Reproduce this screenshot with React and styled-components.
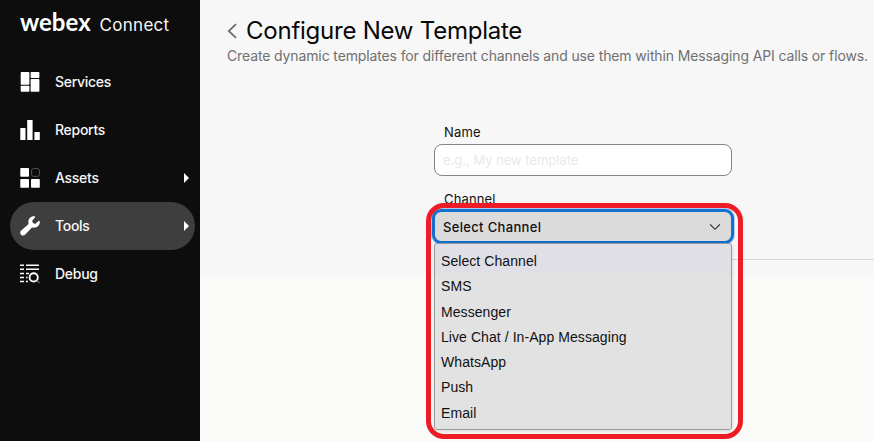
import React from "react";
import styled, { createGlobalStyle, css } from "styled-components";

const GlobalStyle = createGlobalStyle`
  * { box-sizing: border-box; }
  body { margin: 0; overflow: hidden; font-family: Inter, "Liberation Sans", sans-serif; }
  h1, p, ul { margin: 0; padding: 0; }
`;

const Page = styled.div`
  display: flex;
  width: 874px;
  height: 441px;
  overflow: hidden;
`;

const Sidebar = styled.nav`
  width: 200px;
  flex: none;
  padding-left: 10px;
  background: #0d0d0d;
  color: #f7f7f7;
`;

const Brand = styled.div`
  display: flex;
  align-items: baseline;
  height: 58px;
  padding: 9px 0 0 10px;
  line-height: 26px;
  white-space: nowrap;
`;

const BrandName = styled.span`
  width: 79.5px;
  font-family: Lato, sans-serif;
  font-size: 24px;
  font-weight: 700;
  letter-spacing: 0px;
  color: #fff;
`;

const BrandProduct = styled.span`
  font-size: 17px;
  letter-spacing: 0.3px;
`;

const NavItem = styled.div`
  display: flex;
  align-items: center;
  width: 185px;
  height: 48px;
  padding: 0 6px 0 10px;
  border-radius: 24px;
  background: ${(p) => (p.$active ? "#3e3e3e" : "transparent")};
`;

const NavIcon = styled.svg`
  width: 20px;
  height: 20px;
  margin-right: 15px;
  fill: #fff;
`;

const NavLabel = styled.span`
  flex: 1;
  font-size: 14px;
  font-weight: 500;
  line-height: 20px;
  letter-spacing: -0.28px;
`;

const Caret = styled.svg`
  width: 5px;
  height: 10px;
  fill: #fff;
`;

const Main = styled.main`
  flex: 1;
  min-width: 0;
  background: #fafaf8;
`;

const Content = styled.section`
  height: 277px;
  background: #f7f7f7;
`;

const Header = styled.header`
  height: 124px;
  padding: 16px 0 0 27px;
  white-space: nowrap;
`;

const TitleRow = styled.div`
  display: flex;
  align-items: center;
  height: 30px;
`;

const BackIcon = styled.svg`
  width: 10px;
  height: 16px;
  margin-right: 9px;
  fill: none;
  stroke: #6d6d6d;
  stroke-width: 1.8;
`;

const Title = styled.h1`
  font-size: 24px;
  font-weight: 400;
  line-height: 30px;
  letter-spacing: -0.24px;
  color: #080808;
`;

const Subtitle = styled.p`
  font-size: 14px;
  line-height: 20px;
  letter-spacing: -0.125px;
  color: #707070;
`;

const FormRow = styled.div`
  display: flex;
  padding-left: 234px;
`;

const Form = styled.div`
  width: 298px;
  flex: none;
`;

const Divider = styled.div`
  flex: 1;
  height: 136px;
  border-bottom: 1px solid #d8d8d8;
`;

const Label = styled.div`
  height: ${(p) => p.$height}px;
  padding-left: 10px;
  font-size: 13px;
  line-height: 16px;
  letter-spacing: 0.15px;
  color: #111;
`;

const fieldText = css`
  font-family: Inter, sans-serif;
  font-size: 13px;
`;

const NameInput = styled.input`
  ${fieldText}
  display: block;
  width: 298px;
  height: 32px;
  margin-bottom: 15px;
  padding: 0 8px;
  border: 1px solid #858585;
  border-radius: 8px;
  background: #fff;
  outline: none;
  letter-spacing: -0.02px;
  &::placeholder { color: #e9e9ec; opacity: 1; }
`;

const SelectArea = styled.div`
  position: relative;
`;

const SelectBox = styled.div`
  ${fieldText}
  display: flex;
  align-items: center;
  justify-content: space-between;
  width: 302px;
  height: 35px;
  margin-left: -2px;
  padding: 0 10px 0 8px;
  border: 3px solid #146fd1;
  border-radius: 9px;
  background: #dbdbdb;
  box-shadow: 0 0 0 1px #a9cdf0;
  font-weight: 500;
  letter-spacing: 0.33px;
  color: #111;
`;

const Chevron = styled.svg`
  width: 12px;
  height: 8px;
  fill: none;
  stroke: #333;
  stroke-width: 1.1;
`;

const Menu = styled.ul`
  position: absolute;
  top: 34px;
  left: 0;
  width: 298px;
  height: 187px;
  padding-top: 5px;
  list-style: none;
  border: 1px solid #999;
  border-radius: 3px;
  background: linear-gradient(#e0dfe6 0 30px, #e2e2e2 30px);
  box-shadow: 1px 2px 4px rgba(0, 0, 0, 0.12);
  font-family: "Liberation Sans", sans-serif;
`;

const Option = styled.li`
  height: 25.3px;
  padding-left: 6px;
  font-size: 14px;
  line-height: 25px;
  letter-spacing: 0.07px;
  color: #111;
`;

const Highlight = styled.div`
  position: absolute;
  top: -6px;
  left: -8px;
  width: 317px;
  height: 236px;
  border: 5px solid #ee1c25;
  border-radius: 18px;
  pointer-events: none;
`;

const icons = {
  Services: (
    <>
      <rect x="0.7" y="0" width="8.7" height="12.8" rx="0.8" />
      <rect x="10.6" y="0" width="8.8" height="6" rx="0.8" />
      <rect x="0.7" y="13.8" width="8.7" height="6" rx="0.8" />
      <rect x="10.6" y="7" width="8.8" height="12.8" rx="0.8" />
    </>
  ),
  Reports: (
    <>
      <rect x="0.3" y="8" width="5.2" height="12" rx="0.5" />
      <rect x="7.2" y="0" width="5.4" height="20" rx="0.5" />
      <rect x="14.4" y="12" width="5.4" height="8" rx="0.5" />
    </>
  ),
  Assets: (
    <>
      <rect x="0.3" y="0" width="8.7" height="8.8" rx="0.8" />
      <rect x="0.3" y="11" width="8.7" height="8.8" rx="0.8" />
      <rect x="11" y="11" width="8.8" height="8.8" rx="0.8" />
      <rect x="11.6" y="0.6" width="7.8" height="7.8" rx="2" fill="none" stroke="#555" />
    </>
  ),
  Tools: (
    <path d="M14.4 0.2C11 -0.1 8.2 2.6 8.3 6.1L8.6 8L1 14.8C-0.1 15.8 0 17.6 1 18.7C2.1 19.9 4 19.9 5 18.8L12 11.4L13.8 11.7C17.4 11.8 20.1 8.8 19.8 5.5C19.7 4.7 19 4.7 18.6 5.1L15.8 7.4C14.7 8 13.6 7.4 12.9 6.7C12.2 5.9 12.1 4.8 12.7 4.1L15.1 1.2C15.5 0.7 15.1 0.3 14.4 0.2Z" />
  ),
  Debug: (
    <>
      <path d="M0 0.5h4v1.5H0zM6 0.5h13v1.5H6zM0 4.5h4v1.5H0zM6 4.5h13v1.5H6zM0 8.7h4v1.5H0zM6 8.7h3v1.5H6zM0 12.8h4v1.5H0zM6 12.8h1.5v1.5H6zM0 16.8h4v1.5H0zM6 16.8h2v1.5H6z" />
      <circle cx="13.7" cy="13.4" r="4.1" fill="none" stroke="#fff" strokeWidth="1.9" />
      <path d="M17 16.5L19.6 19.2" stroke="#aaa" strokeWidth="1" />
    </>
  ),
};

const navItems = [
  { label: "Services" },
  { label: "Reports" },
  { label: "Assets", expandable: true },
  { label: "Tools", expandable: true, active: true },
  { label: "Debug" },
];

const options = [
  "Select Channel",
  "SMS",
  "Messenger",
  "Live Chat / In-App Messaging",
  "WhatsApp",
  "Push",
  "Email",
];

export default function App() {
  return (
    <Page>
      <GlobalStyle />
      <Sidebar>
        <Brand>
          <BrandName>webex</BrandName>
          <BrandProduct>Connect</BrandProduct>
        </Brand>
        {navItems.map(({ label, expandable, active }) => (
          <NavItem key={label} $active={active}>
            <NavIcon viewBox="0 0 20 20">{icons[label]}</NavIcon>
            <NavLabel>{label}</NavLabel>
            {expandable && (
              <Caret viewBox="0 0 5 10">
                <path d="M0 0L5 5L0 10Z" />
              </Caret>
            )}
          </NavItem>
        ))}
      </Sidebar>
      <Main>
        <Content>
          <Header>
            <TitleRow>
              <BackIcon viewBox="0 0 10 16">
                <path d="M9 1.2L1.8 8L9 14.8" />
              </BackIcon>
              <Title>Configure New Template</Title>
            </TitleRow>
            <Subtitle>
              Create dynamic templates for different channels and use them within Messaging API calls or flows.
            </Subtitle>
          </Header>
          <FormRow>
            <Form>
              <Label $height={20}>Name</Label>
              <NameInput placeholder="e.g., My new template" />
              <Label $height={18}>Channel</Label>
              <SelectArea>
                <SelectBox>
                  Select Channel
                  <Chevron viewBox="0 0 12 8">
                    <path d="M1.2 1.5L6 6.3L10.8 1.5" />
                  </Chevron>
                </SelectBox>
                <Menu>
                  {options.map((option) => (
                    <Option key={option}>{option}</Option>
                  ))}
                </Menu>
                <Highlight />
              </SelectArea>
            </Form>
            <Divider />
          </FormRow>
        </Content>
      </Main>
    </Page>
  );
}
